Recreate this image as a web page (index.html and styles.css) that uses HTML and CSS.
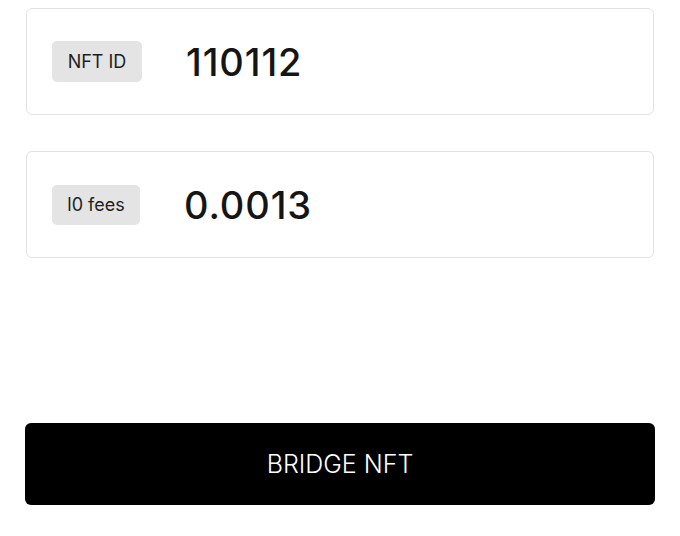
FILE: index.html
```html
<!DOCTYPE html>
<html>
<head>
<meta charset="utf-8">
<link rel="stylesheet" href="styles.css">
</head>
<body>
<div class="page">
  <div class="field">
    <span class="badge">NFT ID</span>
    <span class="value">110112</span>
  </div>
  <div class="field">
    <span class="badge">l0 fees</span>
    <span class="value">0.0013</span>
  </div>
  <button class="bridge">BRIDGE NFT</button>
</div>
</body>
</html>
```
FILE: styles.css
```css
* { box-sizing: border-box; }
html, body { margin: 0; background: #fff; }
body { font-family: Inter, "Noto Sans", sans-serif; color: #161616; }
.page {
  padding: 8px 25px 0 25px;
  display: flex;
  flex-direction: column;
}
.field {
  margin: 0 1px;
  height: 107px;
  border: 1.5px solid #e2e2e2;
  border-radius: 6px;
  display: flex;
  align-items: center;
  padding-left: 25px;
  gap: 44px;
}
.field + .field { margin-top: 36px; }
.badge {
  background: #e4e4e4;
  border-radius: 5px;
  height: 41px;
  width: 90px;
  display: flex;
  align-items: center;
  justify-content: center;
  font-size: 18px;
  color: #1e1e1e;
}
.field + .field .badge { width: 88px; height: 40px; }
.value {
  font-size: 38px;
  font-weight: 500;
  color: #151515;
  letter-spacing: 0.9px;
}
.bridge {
  margin-top: 165px;
  height: 82px;
  width: 630px;
  background: #000;
  color: #fff;
  border: none;
  border-radius: 6px;
  font-family: Inter, "Noto Sans", sans-serif;
  font-size: 25px;
  font-weight: 300;
}
```
